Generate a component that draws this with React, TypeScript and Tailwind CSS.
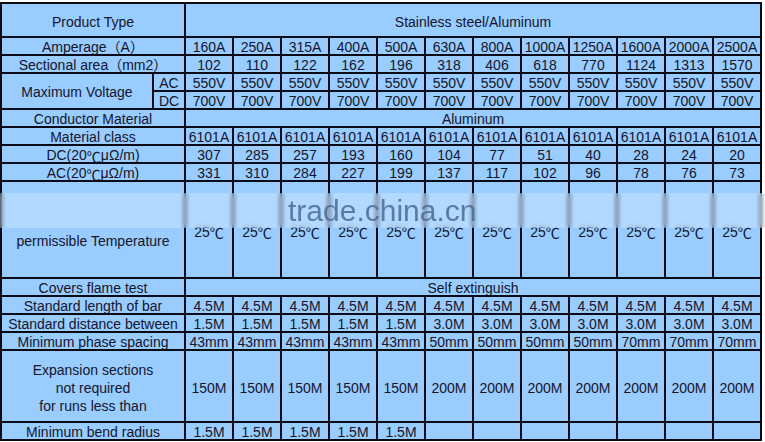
import React from "react";

const cellBase =
  "bg-[#99ccff] flex justify-center overflow-hidden text-[14px] text-[#15152b] whitespace-nowrap";
const rowCell = `${cellBase} items-end leading-[14px]`;
const bigCell = `${cellBase} items-center leading-[16px]`;

const font = { fontFamily: '"Liberation Sans", "Noto Sans CJK SC", Arial, sans-serif' };
const cjk = { fontFamily: '"Noto Sans CJK SC", sans-serif' };

const Deg = () => (
  <span className="leading-[12px]" style={cjk}>
    ℃
  </span>
);

function Label({ children }: { children: React.ReactNode }) {
  return <div className={`${rowCell} col-span-2`}>{children}</div>;
}

function DataRow({ values }: { values: string[] }) {
  return (
    <>
      {values.map((v, i) => (
        <div key={i} className={rowCell}>
          {v}
        </div>
      ))}
    </>
  );
}

function Merged({ children, cls = rowCell }: { children: React.ReactNode; cls?: string }) {
  return <div className={`${cls} col-span-12`}>{children}</div>;
}

const rep = (v: string, n: number) => Array.from({ length: n }, () => v);

export default function App() {
  return (
    <div className="relative w-[765px] h-[442px] bg-white pt-[2px] overflow-hidden" style={font}>
      <div className="w-[762px] bg-[#0b0b18] p-[2px] grid gap-[2px] grid-cols-[150px_30px_repeat(12,46px)] grid-rows-[32px_repeat(8,16px)_95px_repeat(4,16px)_70px_16px]">
        {/* Row 1 */}
        <div className={`${bigCell} col-span-2 pt-[4px]`}>Product Type</div>
        <Merged cls={`${bigCell} pt-[4px]`}>Stainless steel/Aluminum</Merged>

        {/* Amperage */}
        <Label>Amperage（A）</Label>
        <DataRow values={["160A", "250A", "315A", "400A", "500A", "630A", "800A", "1000A", "1250A", "1600A", "2000A", "2500A"]} />

        {/* Sectional area */}
        <Label>Sectional area（mm2）</Label>
        <DataRow values={["102", "110", "122", "162", "196", "318", "406", "618", "770", "1124", "1313", "1570"]} />

        {/* Max voltage */}
        <div className={`${bigCell} pt-[2px] row-span-2`}>Maximum Voltage</div>
        <div className={rowCell}>AC</div>
        <DataRow values={rep("550V", 12)} />
        <div className={rowCell}>DC</div>
        <DataRow values={rep("700V", 12)} />

        {/* Conductor */}
        <Label>Conductor Material</Label>
        <Merged>Aluminum</Merged>

        <Label>Material class</Label>
        <DataRow values={rep("6101A", 12)} />

        <Label>
          DC(20<Deg />μΩ/m)
        </Label>
        <DataRow values={["307", "285", "257", "193", "160", "104", "77", "51", "40", "28", "24", "20"]} />

        <Label>
          AC(20<Deg />μΩ/m)
        </Label>
        <DataRow values={["331", "310", "284", "227", "199", "137", "117", "102", "96", "78", "76", "73"]} />

        <div className={`${bigCell} col-span-2 pt-[22px]`}>permissible Temperature</div>
        {rep("25", 12).map((v, i) => (
          <div key={i} className={`${bigCell} pt-[4px]`}>
            {v}
            <Deg />
          </div>
        ))}

        <Label>Covers flame test</Label>
        <Merged>Self extinguish</Merged>

        <Label>Standard length of bar</Label>
        <DataRow values={rep("4.5M", 12)} />

        <Label>Standard distance between</Label>
        <DataRow values={[...rep("1.5M", 5), ...rep("3.0M", 7)]} />

        <Label>Minimum phase spacing</Label>
        <DataRow values={[...rep("43mm", 5), ...rep("50mm", 4), ...rep("70mm", 3)]} />

        <div className={`${cellBase} col-span-2 pt-[4px] flex-col items-center leading-[18px]`}>
          <span>Expansion sections</span>
          <span>not required</span>
          <span>for runs less than</span>
        </div>
        {[...rep("150M", 5), ...rep("200M", 7)].map((v, i) => (
          <div key={i} className={`${bigCell} pt-[3px]`}>
            {v}
          </div>
        ))}

        <Label>Minimum bend radius</Label>
        <DataRow values={[...rep("1.5M", 5), ...rep("", 7)]} />
      </div>

      {/* watermark band */}
      <div className="absolute left-0 top-[193px] w-[765px] h-[35px] bg-white/25 backdrop-blur-[2px]" />
      <div
        className="absolute left-[288px] top-[196px] text-[30px] leading-[30px] text-[#4f7198]/90 blur-[0.5px] whitespace-nowrap"
        style={font}
      >
        trade.china.cn
      </div>
    </div>
  );
}
